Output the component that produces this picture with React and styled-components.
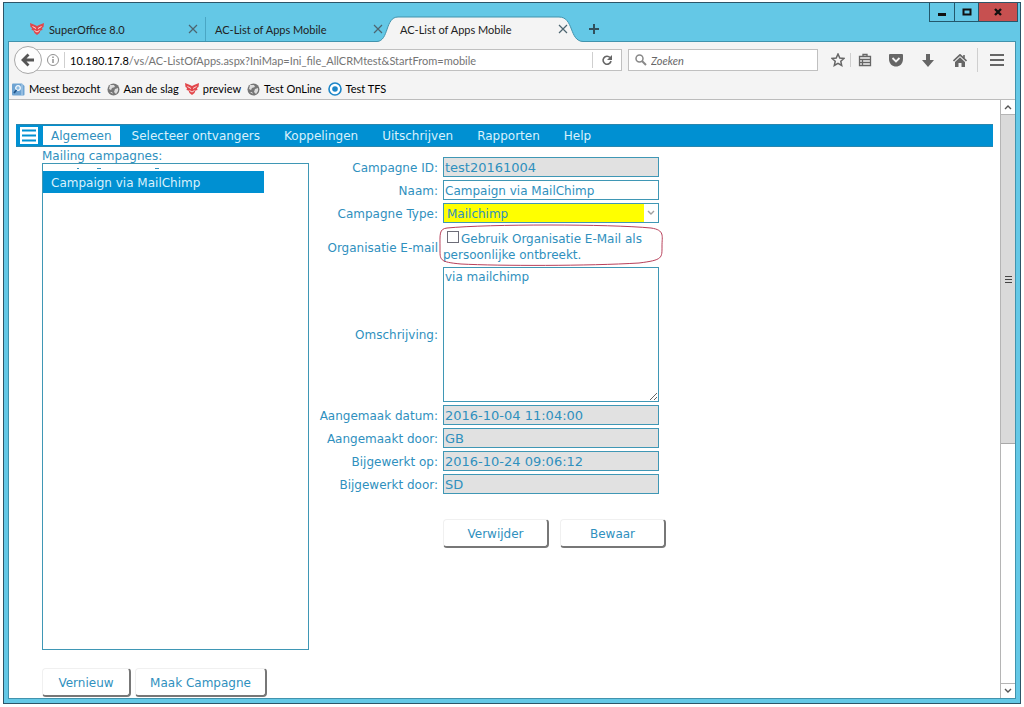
import React from 'react';
import styled, { createGlobalStyle } from 'styled-components';

const Global = createGlobalStyle`
  * { box-sizing: border-box; }
  body { margin: 0; background: #fff; }
  button, input, select, textarea { font: inherit; color: inherit; }
  svg { display: block; flex: none; }
`;

const chromeFont = 'Lato, "Open Sans", sans-serif';
const pageFont = '"DejaVu Sans", Verdana, sans-serif';
const blue = '#0090d2';
const ink = '#2f90be';

const Page = styled.div`
  min-height: 100vh;
  padding: 2px 3px 3px;
  display: flex;
`;
const Window = styled.div`
  flex: 1;
  min-width: 0;
  display: flex;
  flex-direction: column;
  padding: 0 4px 4px;
  border: 1px solid #2d5568;
  background: #64c8e6;
  font: 11px/16px ${chromeFont};
  color: #222;
`;
const TitleBar = styled.header`
  display: flex;
  justify-content: space-between;
  align-items: flex-start;
  height: 38px;
`;
const TabStrip = styled.div`
  display: flex;
  align-self: flex-end;
  margin-left: 10px;
`;
const Tab = styled.div`
  position: relative;
  display: flex;
  align-items: center;
  gap: 5px;
  width: ${p => p.$width}px;
  height: 24px;
  padding: 0 7px 0 ${p => (p.$icon ? 11 : 9)}px;
  border-left: 1px solid ${p => (p.$divided ? '#4aa6c4' : 'transparent')};
`;
const TabShape = styled.svg`
  position: absolute;
  left: -14px;
  top: -1px;
`;
const TabTitle = styled.span`
  position: relative;
  flex: 1;
  padding-top: 1px;
  white-space: nowrap;
`;
const BareButton = styled.button`
  position: relative;
  display: flex;
  align-items: center;
  justify-content: center;
  padding: 0;
  border: 0;
  background: none;
`;
const NewTab = styled(BareButton)`
  width: 24px;
  height: 24px;
  margin-left: 7px;
`;
const Controls = styled.div`
  display: flex;
  margin-right: -2px;
  border: 1px solid #23586c;
  border-top: 0;
`;
const Control = styled(BareButton)`
  width: ${p => p.$width}px;
  height: 18px;
  border-left: ${p => (p.$first ? 0 : 1)}px solid #23586c;
  background: ${p => (p.$close ? '#c75050' : 'transparent')};
`;
const Client = styled.div`
  flex: 1;
  display: flex;
  flex-direction: column;
  border: 1px solid #4193ad;
  background: #fff;
`;
const Toolbar = styled.div`
  padding-top: 4px;
  border-bottom: 1px solid #bcbcbc;
  background: #f4f4f4;
`;
const NavRow = styled.div`
  display: flex;
  align-items: center;
  height: 28px;
  padding-left: 5px;
`;
const Back = styled(BareButton)`
  z-index: 1;
  width: 28px;
  height: 28px;
  border: 1px solid #a8a8a8;
  border-radius: 50%;
  background: #fcfcfc;
`;
const Field = styled.div`
  display: flex;
  align-items: center;
  height: 22px;
  border: 1px solid #c0c0c0;
  background: #fff;
`;
const AddressField = styled(Field)`
  flex: 1;
  margin-left: -14px;
  padding: 0 8px 0 18px;
`;
const SearchField = styled(Field)`
  width: 190px;
  margin: 0 8px 0 6px;
  padding: 0 6px;
  gap: 4px;
`;
const Address = styled.div`
  flex: 1;
  padding-top: 1px;
  color: #747474;
  white-space: nowrap;
`;
const Host = styled.b`
  font-weight: 400;
  color: #000;
`;
const SearchInput = styled.input`
  flex: 1;
  min-width: 0;
  padding: 1px 0 0;
  border: 0;
  outline: 0;
  background: none;
  &::placeholder { color: #666; font-style: italic; opacity: 1; }
`;
const Rule = styled.span`
  width: 1px;
  height: ${p => p.$height}px;
  margin: 0 ${p => p.$gap}px;
  background: #cfcfcf;
`;
const Tools = styled.div`
  display: flex;
  align-items: center;
`;
const Tool = styled(BareButton)`
  width: ${p => p.$width}px;
  height: 24px;
`;
const Bookmarks = styled.nav`
  display: flex;
  align-items: center;
  gap: 6px;
  height: 24px;
  margin-top: 1px;
  padding: 4px 3px 0;
`;
const Bookmark = styled.a`
  display: flex;
  align-items: center;
  gap: 4px;
  color: #000;
  text-decoration: none;
  white-space: nowrap;
`;
const Viewport = styled.div`
  flex: 1;
  display: flex;
`;
const Content = styled.main`
  flex: 1;
  min-width: 0;
  display: flex;
  flex-direction: column;
  padding: 24px 7px 1px;
  font: 12px/16px ${pageFont};
  color: ${ink};
`;
const AppBar = styled.nav`
  display: flex;
  align-items: center;
  height: 23px;
  padding-left: 4px;
  border: 1px solid #2a86ae;
  border-width: 1px 0;
  background: ${blue};
`;
const MenuButton = styled(BareButton)`
  width: 18px;
  height: 17px;
  margin-right: 5px;
  background: #fff;
`;
const AppTab = styled.a`
  height: 19px;
  padding: 0 ${p => (p.$active ? 8 : 12)}px;
  line-height: 21px;
  color: ${p => (p.$active ? ink : '#d9f1fc')};
  background: ${p => (p.$active ? '#fff' : 'transparent')};
  text-decoration: none;
  white-space: nowrap;
`;
const Columns = styled.div`
  flex: 1;
  display: flex;
  padding-left: 26px;
`;
const ListPane = styled.section`
  display: flex;
  flex-direction: column;
  width: 267px;
`;
const ListTitle = styled.h2`
  margin: 0;
  height: 16px;
  padding-top: 1px;
  font-size: 12px;
  font-weight: 400;
  line-height: 16px;
`;
const List = styled.ul`
  flex: 1;
  margin: 0;
  padding: 0;
  border: 1px solid #3f97b5;
  list-style: none;
`;
const ScrolledItem = styled.li`
  height: 7px;
  padding: 4px 0 0 33px;
`;
const ListItem = styled.li`
  width: 221px;
  height: 22px;
  padding-left: 8px;
  line-height: 24px;
  color: #d9f1fc;
  background: ${blue};
`;
const Buttons = styled.div`
  display: flex;
  align-items: flex-start;
  gap: ${p => p.$gap}px;
  margin-top: 18px;
`;
const Push = styled.button`
  flex: none;
  width: ${p => p.$width}px;
  height: 29px;
  padding: 2px 0 0;
  border: 1px solid #f0f0f0;
  border-right: 2px solid #777;
  border-bottom: 2px solid #777;
  border-radius: 4px;
  background: #fff;
  white-space: nowrap;
`;
const Form = styled.form`
  display: grid;
  grid-template-columns: 129px 216px;
  align-content: start;
  align-items: center;
  column-gap: 5px;
  row-gap: 3px;
  padding-top: 10px;
`;
const Label = styled.label`
  padding-top: ${p => (p.$low ? 5 : 1)}px;
  text-align: right;
  white-space: nowrap;
`;
const TextInput = styled.input`
  width: 100%;
  height: 20px;
  padding: 1px 1px 0;
  border: 1px solid #3f97b5;
  border-radius: 0;
  font-size: ${p => (p.readOnly ? 13 : 12)}px;
  background: ${p => (p.readOnly ? '#e1e1e1' : '#fff')};
`;
const SelectWrap = styled.div`
  position: relative;
  height: 20px;
`;
const Select = styled.select`
  appearance: none;
  width: 100%;
  height: 20px;
  padding: 1px 18px 0 3px;
  border: 1px solid #3f97b5;
  border-radius: 0;
  background: #ffff00;
`;
const SelectArrow = styled.span`
  position: absolute;
  top: 1px;
  right: 1px;
  display: flex;
  align-items: center;
  justify-content: center;
  width: 14px;
  height: 18px;
  background: #fff;
  pointer-events: none;
`;
const CheckLine = styled.label`
  position: relative;
  height: 38px;
  padding-top: 5px;
`;
const Check = styled.input`
  appearance: none;
  width: 12px;
  height: 12px;
  margin: 0 2px 0 4px;
  border: 1px solid #6d6d78;
  background: #fff;
`;
const Marker = styled.svg`
  position: absolute;
  left: -4px;
  top: -2px;
`;
const TextArea = styled.textarea`
  display: block;
  width: 100%;
  height: 135px;
  padding: 1px;
  border: 1px solid #3f97b5;
  border-radius: 0;
  resize: vertical;
  background: #fff;
`;
const FormButtons = styled(Buttons)`
  grid-column: 2;
  margin-top: 22px;
`;
const ScrollBar = styled.div`
  display: flex;
  flex-direction: column;
  width: 15px;
  border-left: 1px solid #b5b5b5;
`;
const ScrollButton = styled(BareButton)`
  width: 14px;
  height: 15px;
  border: 0 solid #b5b5b5;
  border-width: ${p => (p.$up ? '0 0 1px' : '1px 0 0')};
`;
const Track = styled.div`
  flex: 1;
`;
const Thumb = styled.div`
  display: flex;
  align-items: center;
  justify-content: center;
  height: 58%;
  border-bottom: 1px solid #a9a9a9;
  background: #dadada;
`;

const Fox = () => (
  <svg width="14" height="12" viewBox="0 0 14 12">
    <path d="M0 0l5 2 2 1 2-1 5-2-.5 4-1.500 1 .5 2-2 .5-1 2.500-2.500 2L4.500 10l-1-2.500-2-.5.5-2L.5 4z" fill="#e2474b" />
    <path d="M2.500 3.500l3.500 2M11.500 3.500L8 5.500M4.500 7.500L7 9l2.500-1.500" stroke="#f9dcdc" fill="none" />
  </svg>
);
const Globe = () => (
  <svg width="13" height="13" viewBox="0 0 13 13">
    <circle cx="6.5" cy="6.5" r="6" fill="#777" />
    <path d="M3 2l4 0 1 2-3 1-1 2-2-1zM8 6l3-1 0 3-2 3-2-2zM3 9l2 0 1 2z" fill="#ddd" />
  </svg>
);
const Visited = () => (
  <svg width="13" height="13" viewBox="0 0 13 13">
    <path d="M0 1.500q0-1 1-1h9l2.500 2.500v8.500q0 1-1 1H1q-1 0-1-1z" fill="#6ea3d2" />
    <path d="M10 1v11" stroke="#b9d6ee" />
    <circle cx="6" cy="5" r="2.300" fill="#8dbce2" stroke="#f2f8fd" strokeWidth="1.300" />
    <path d="M4.500 7L2 10" stroke="#1f5488" strokeWidth="1.800" />
  </svg>
);
const Ring = () => (
  <svg width="14" height="14" viewBox="0 0 14 14">
    <circle cx="7" cy="7" r="6" fill="#fff" stroke="#1d86c8" strokeWidth="1.600" />
    <circle cx="7" cy="7" r="2.800" fill="#1d86c8" />
  </svg>
);
const Cross = () => (
  <svg width="10" height="10" viewBox="0 0 10 10">
    <path d="M1 1l8 8M9 1l-8 8" stroke="#4d6570" strokeWidth="1.200" />
  </svg>
);
const Chevron = ({ up, color = '#555' }) => (
  <svg width="8" height="6" viewBox="0 0 8 6">
    <path d={up ? 'M1 5l3-3 3 3' : 'M1 1l3 3 3-3'} fill="none" stroke={color} strokeWidth="1.400" />
  </svg>
);

const readonlyRows = [
  ['created', 'Aangemaak datum:', '2016-10-04 11:04:00'],
  ['creator', 'Aangemaakt door:', 'GB'],
  ['updated', 'Bijgewerkt op:', '2016-10-24 09:06:12'],
  ['updater', 'Bijgewerkt door:', 'SD'],
];

export default function App() {
  return (
    <Page>
      <Global />
      <Window>
        <TitleBar>
          <TabStrip>
            <Tab $width={187} $icon>
              <Fox />
              <TabTitle>SuperOffice 8.0</TabTitle>
              <BareButton aria-label="Sluit tabblad"><Cross /></BareButton>
            </Tab>
            <Tab $width={185} $divided>
              <TabTitle>AC-List of Apps Mobile</TabTitle>
              <BareButton aria-label="Sluit tabblad"><Cross /></BareButton>
            </Tab>
            <Tab $width={185}>
              <TabShape width="206" height="26" viewBox="0 0 206 26">
                <path d="M0 25.5C12 25 8 1 21 1H182C197 1 192 25 206 25.5V26H0z" fill="#f4f4f4" />
                <path d="M0 25.5C12 25 8 1 21 1H182C197 1 192 25 206 25.5" fill="none" stroke="#4193ad" />
              </TabShape>
              <TabTitle>AC-List of Apps Mobile</TabTitle>
              <BareButton aria-label="Sluit tabblad"><Cross /></BareButton>
            </Tab>
            <NewTab aria-label="Nieuw tabblad">
              <svg width="12" height="12" viewBox="0 0 12 12">
                <path d="M6 1v10M1 6h10" stroke="#31505c" strokeWidth="2" />
              </svg>
            </NewTab>
          </TabStrip>
          <Controls>
            <Control $width={24} $first aria-label="Minimaliseren">
              <svg width="10" height="10" viewBox="0 0 10 10"><path d="M1 7.500h8" stroke="#111" strokeWidth="3" /></svg>
            </Control>
            <Control $width={24} aria-label="Maximaliseren">
              <svg width="10" height="10" viewBox="0 0 10 10"><path d="M1.500 2.500h7v5h-7z" fill="none" stroke="#111" strokeWidth="2" /></svg>
            </Control>
            <Control $width={39} $close aria-label="Sluiten">
              <svg width="10" height="10" viewBox="0 0 10 10"><path d="M2 2l6 6M8 2l-6 6" stroke="#111" strokeWidth="2.400" /></svg>
            </Control>
          </Controls>
        </TitleBar>
        <Client>
          <Toolbar>
            <NavRow>
              <Back aria-label="Vorige">
                <svg width="14" height="14" viewBox="0 0 14 14">
                  <path d="M13 7H3M7.500 1.500L2 7l5.500 5.500" fill="none" stroke="#555" strokeWidth="2.800" />
                </svg>
              </Back>
              <AddressField>
                <svg width="12" height="12" viewBox="0 0 12 12">
                  <circle cx="6" cy="6" r="5.500" fill="none" stroke="#909090" />
                  <path d="M6 5v4M6 2.500v1.500" stroke="#808080" strokeWidth="1.300" />
                </svg>
                <Rule $height={16} $gap={5} />
                <Address><Host>10.180.17.8</Host>/vs/AC-ListOfApps.aspx?IniMap=Ini_file_AllCRMtest&amp;StartFrom=mobile</Address>
                <Rule $height={16} $gap={8} />
                <BareButton aria-label="Vernieuwen">
                  <svg width="12" height="12" viewBox="0 0 12 12">
                    <path d="M9 3.500A4 4 0 1 0 10 7" fill="none" stroke="#666" strokeWidth="1.600" />
                    <path d="M11 1v5H6z" fill="#666" />
                  </svg>
                </BareButton>
              </AddressField>
              <SearchField>
                <svg width="12" height="12" viewBox="0 0 12 12">
                  <circle cx="4.500" cy="4.500" r="3.500" fill="none" stroke="#888" strokeWidth="1.500" />
                  <path d="M7 7l4 4" stroke="#888" strokeWidth="2" />
                </svg>
                <SearchInput placeholder="Zoeken" aria-label="Zoeken" />
              </SearchField>
              <Tools>
                <Tool $width={24} aria-label="Bladwijzer maken">
                  <svg width="14" height="14" viewBox="0 0 14 14">
                    <path d="M7 1l1.800 4 4.200.5-3.200 2.800.9 4.200L7 10.300l-3.700 2.200.9-4.200L1 5.500 5.200 5z" fill="none" stroke="#666" strokeWidth="1.500" />
                  </svg>
                </Tool>
                <Rule $height={14} $gap={0} />
                <Tool $width={28} aria-label="Bladwijzers">
                  <svg width="14" height="14" viewBox="0 0 14 14">
                    <path d="M1.500 3.500h11v9h-11zM2 6.500h10M2 9.500h10M4.500 6v6M5 3V1.500h4V3" fill="none" stroke="#666" strokeWidth="1.300" />
                  </svg>
                </Tool>
                <Tool $width={34} aria-label="Pocket">
                  <svg width="14" height="13" viewBox="0 0 14 13">
                    <path d="M1 0h12q1 0 1 1v4c0 10-14 10-14 0V1q0-1 1-1z" fill="#666" />
                    <path d="M3.500 4L7 7.500 10.500 4" fill="none" stroke="#f4f4f4" strokeWidth="1.800" />
                  </svg>
                </Tool>
                <Tool $width={30} aria-label="Downloads">
                  <svg width="12" height="13" viewBox="0 0 12 13"><path d="M4 0h4v6h4l-6 7-6-7h4z" fill="#666" /></svg>
                </Tool>
                <Tool $width={34} aria-label="Startpagina">
                  <svg width="14" height="13" viewBox="0 0 14 13">
                    <path d="M.5 7L7 .8 13.500 7M11 1v3" fill="none" stroke="#666" strokeWidth="1.600" />
                    <path d="M2 8l5-4.800L12 8v5H8.500V9h-3v4H2z" fill="#666" />
                  </svg>
                </Tool>
                <Rule $height={24} $gap={0} />
                <Tool $width={37} aria-label="Menu">
                  <svg width="14" height="12" viewBox="0 0 14 12"><path d="M0 1h14M0 6h14M0 11h14" stroke="#666" strokeWidth="2" /></svg>
                </Tool>
              </Tools>
            </NavRow>
            <Bookmarks>
              <Bookmark href="#"><Visited />Meest bezocht</Bookmark>
              <Bookmark href="#"><Globe />Aan de slag</Bookmark>
              <Bookmark href="#"><Fox />preview</Bookmark>
              <Bookmark href="#"><Globe />Test OnLine</Bookmark>
              <Bookmark href="#"><Ring />Test TFS</Bookmark>
            </Bookmarks>
          </Toolbar>
          <Viewport>
            <Content>
              <AppBar>
                <MenuButton aria-label="Menu">
                  <svg width="14" height="13" viewBox="0 0 14 13"><path d="M0 1.500h14M0 6.500h14M0 11.500h14" stroke={blue} strokeWidth="2" /></svg>
                </MenuButton>
                <AppTab href="#" $active>Algemeen</AppTab>
                <AppTab href="#">Selecteer ontvangers</AppTab>
                <AppTab href="#">Koppelingen</AppTab>
                <AppTab href="#">Uitschrijven</AppTab>
                <AppTab href="#">Rapporten</AppTab>
                <AppTab href="#">Help</AppTab>
              </AppBar>
              <Columns>
                <ListPane>
                  <ListTitle>Mailing campagnes:</ListTitle>
                  <List>
                    <ScrolledItem aria-hidden="true">
                      <svg width="84" height="2" viewBox="0 0 84 2">
                        <path d="M1 .5h2M21 .5h4M79 .5h4" stroke={ink} />
                      </svg>
                    </ScrolledItem>
                    <ListItem>Campaign via MailChimp</ListItem>
                  </List>
                  <Buttons $gap={4}>
                    <Push type="button" $width={89}>Vernieuw</Push>
                    <Push type="button" $width={132}>Maak Campagne</Push>
                  </Buttons>
                </ListPane>
                <Form>
                  <Label htmlFor="cid">Campagne ID:</Label>
                  <TextInput id="cid" readOnly value="test20161004" />
                  <Label htmlFor="name">Naam:</Label>
                  <TextInput id="name" defaultValue="Campaign via MailChimp" />
                  <Label htmlFor="type">Campagne Type:</Label>
                  <SelectWrap>
                    <Select id="type"><option>Mailchimp</option></Select>
                    <SelectArrow><Chevron color="#a0a0a0" /></SelectArrow>
                  </SelectWrap>
                  <Label htmlFor="orgmail" $low>Organisatie E-mail</Label>
                  <CheckLine>
                    <Marker width="226" height="42" viewBox="0 0 226 42">
                      <path d="M8 4C50 0 170 0 212 4C226 6 223 12 223 22C223 34 224 36 200 39C150 42 60 42 22 40C0 38 1 36 1 24C1 10 0 5 8 4z" fill="none" stroke="#b8405a" />
                    </Marker>
                    <Check type="checkbox" id="orgmail" />Gebruik Organisatie E-Mail als persoonlijke ontbreekt.
                  </CheckLine>
                  <Label htmlFor="desc">Omschrijving:</Label>
                  <TextArea id="desc" defaultValue="via mailchimp" />
                  {readonlyRows.map(([id, label, value]) => (
                    <React.Fragment key={id}>
                      <Label htmlFor={id}>{label}</Label>
                      <TextInput id={id} readOnly value={value} />
                    </React.Fragment>
                  ))}
                  <FormButtons $gap={11}>
                    <Push type="button" $width={106}>Verwijder</Push>
                    <Push type="button" $width={106}>Bewaar</Push>
                  </FormButtons>
                </Form>
              </Columns>
            </Content>
            <ScrollBar>
              <ScrollButton $up aria-label="Omhoog"><Chevron up /></ScrollButton>
              <Track>
                <Thumb>
                  <svg width="7" height="7" viewBox="0 0 7 7"><path d="M0 .5h7M0 3.500h7M0 6.500h7" stroke="#444" /></svg>
                </Thumb>
              </Track>
              <ScrollButton aria-label="Omlaag"><Chevron /></ScrollButton>
            </ScrollBar>
          </Viewport>
        </Client>
      </Window>
    </Page>
  );
}
